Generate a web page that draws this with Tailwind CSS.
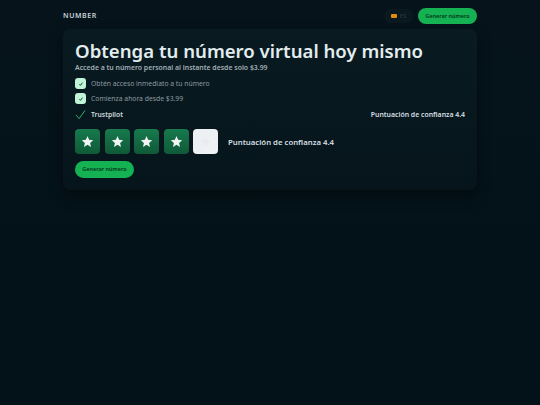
<!DOCTYPE html>
<html lang="es">
<head>
    <meta charset="UTF-8">
    <title>Number</title>
    <script src="https://cdn.jsdelivr.net/npm/@tailwindcss/browser@4"></script>
</head>
<body class="bg-[#02121a] font-['Noto_Sans',sans-serif] antialiased">
    <div class="w-[540px] h-[405px] overflow-hidden bg-gradient-to-b from-[#06131b] to-[#021218]">
        <div class="w-[414px] mx-auto">
            <!-- Header -->
            <header class="h-[29px] pt-[8px] flex items-start justify-between">
                <span class="mt-[3px] text-[7px] leading-[10px] font-semibold tracking-[0.6px] text-[#c9d4d9]">NUMBER</span>
                <div class="flex items-center gap-[5px]">
                    <div class="w-[29px] h-[14px] rounded-full bg-[#0a181f] flex items-center justify-center gap-[3px]">
                        <span class="w-[6px] h-[4px] rounded-[1px] bg-[#e8890c]"></span>
                        <span class="text-[6px] leading-none font-semibold text-[#27343a]">ES</span>
                    </div>
                    <button class="w-[59px] h-[16px] rounded-full bg-[#14b253] text-[5.5px] font-semibold text-[#07331c]">Generar número</button>
                </div>
            </header>

            <!-- Card -->
            <main class="h-[161px] rounded-[8px] bg-gradient-to-b from-[#0a1a21] to-[#06151c] shadow-[0_6px_14px_rgba(0,0,0,0.4)] px-[12px] pt-[10px]">
                <h1 class="text-[18.6px] leading-[24px] font-semibold text-[#e2edef]">Obtenga tu número virtual hoy mismo</h1>
                <p class="text-[6.9px] leading-[9px] font-semibold text-[#a3afb5]">Accede a tu número personal al instante desde solo $3.99</p>

                <ul class="mt-[6px] flex flex-col gap-[4px]">
                    <li class="flex items-center gap-[5px]">
                        <span class="w-[11px] h-[11px] rounded-[3px] bg-[#c0f4d9] flex items-center justify-center">
                            <svg viewBox="0 0 10 10" class="w-[6px] h-[6px]" fill="none" stroke="#0b3d26" stroke-width="1.6"><path d="M2.5 5.5l1.5 1.8 3.5-4.5"/></svg>
                        </span>
                        <span class="text-[6.8px] leading-[11px] text-[#8d9aa1]">Obtén acceso inmediato a tu número</span>
                    </li>
                    <li class="flex items-center gap-[5px]">
                        <span class="w-[11px] h-[11px] rounded-[3px] bg-[#c0f4d9] flex items-center justify-center">
                            <svg viewBox="0 0 10 10" class="w-[6px] h-[6px]" fill="none" stroke="#0b3d26" stroke-width="1.6"><path d="M2.5 5.5l1.5 1.8 3.5-4.5"/></svg>
                        </span>
                        <span class="text-[6.8px] leading-[11px] text-[#8d9aa1]">Comienza ahora desde $3.99</span>
                    </li>
                </ul>

                <div class="mt-[5px] flex items-center justify-between">
                    <div class="flex items-center gap-[5px]">
                        <svg viewBox="0 0 12 12" class="w-[11px] h-[11px]" fill="none" stroke="#2fbf71" stroke-width="1"><path d="M1 6.5l3.5 4L11 1.5"/></svg>
                        <span class="text-[6.8px] leading-[10px] font-semibold text-[#cfd9dd]">Trustpilot</span>
                    </div>
                    <span class="text-[6.9px] leading-[10px] font-semibold text-[#d5dfe3]">Puntuación de confianza 4.4</span>
                </div>

                <div class="mt-[9px] flex items-center gap-[4.5px]">
                    <div class="w-[25px] h-[25px] rounded-[4px] bg-gradient-to-b from-[#177a4d] to-[#0f5a38] flex items-center justify-center">
                        <svg viewBox="0 0 24 24" class="w-[13px] h-[13px]" fill="#f1f6f4"><path d="M12 2l3 6.9 7.5.7-5.7 5 1.7 7.4L12 18l-6.5 4 1.7-7.4-5.7-5 7.5-.7z"/></svg>
                    </div>
                    <div class="w-[25px] h-[25px] rounded-[4px] bg-gradient-to-b from-[#177a4d] to-[#0f5a38] flex items-center justify-center">
                        <svg viewBox="0 0 24 24" class="w-[13px] h-[13px]" fill="#f1f6f4"><path d="M12 2l3 6.9 7.5.7-5.7 5 1.7 7.4L12 18l-6.5 4 1.7-7.4-5.7-5 7.5-.7z"/></svg>
                    </div>
                    <div class="w-[25px] h-[25px] rounded-[4px] bg-gradient-to-b from-[#177a4d] to-[#0f5a38] flex items-center justify-center">
                        <svg viewBox="0 0 24 24" class="w-[13px] h-[13px]" fill="#f1f6f4"><path d="M12 2l3 6.9 7.5.7-5.7 5 1.7 7.4L12 18l-6.5 4 1.7-7.4-5.7-5 7.5-.7z"/></svg>
                    </div>
                    <div class="w-[25px] h-[25px] rounded-[4px] bg-gradient-to-b from-[#177a4d] to-[#0f5a38] flex items-center justify-center">
                        <svg viewBox="0 0 24 24" class="w-[13px] h-[13px]" fill="#f1f6f4"><path d="M12 2l3 6.9 7.5.7-5.7 5 1.7 7.4L12 18l-6.5 4 1.7-7.4-5.7-5 7.5-.7z"/></svg>
                    </div>
                    <div class="w-[25px] h-[25px] rounded-[4px] bg-[#eef1f3] flex items-center justify-center">
                        <svg viewBox="0 0 24 24" class="w-[13px] h-[13px]" fill="#e9ecee"><path d="M12 2l3 6.9 7.5.7-5.7 5 1.7 7.4L12 18l-6.5 4 1.7-7.4-5.7-5 7.5-.7z"/></svg>
                    </div>
                    <span class="ml-[5.5px] text-[7.75px] leading-[10px] font-semibold text-[#d5dfe3]">Puntuación de confianza 4.4</span>
                </div>

                <button class="mt-[7px] block w-[59px] h-[17px] rounded-full bg-[#14b253] text-[5.5px] font-semibold text-[#07331c]">Generar número</button>
            </main>
        </div>
    </div>
</body>
</html>
